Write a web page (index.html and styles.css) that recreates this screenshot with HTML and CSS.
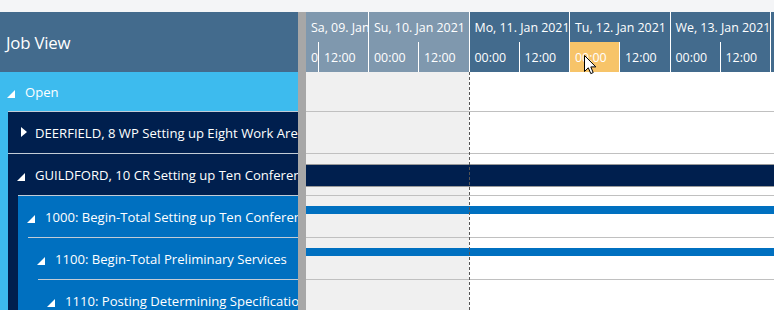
FILE: index.html
```html
<!DOCTYPE html>
<html>
<head>
<meta charset="utf-8">
<link rel="stylesheet" href="styles.css">
</head>
<body>
<div class="topbar"></div>
<div class="main">
  <div class="left">
    <div class="lhead">Job View</div>
    <div class="tree">
      <div class="grp g-open">
        <div class="row first"><span class="tri exp"></span><span class="lbl">Open</span></div>
        <div class="kids k0">
          <div class="grp g-navy">
            <div class="row"><span class="tri col"></span><span class="lbl">DEERFIELD, 8 WP Setting up Eight Work Areas</span></div>
          </div>
          <div class="grp g-navy">
            <div class="row"><span class="tri exp"></span><span class="lbl">GUILDFORD, 10 CR Setting up Ten Conference Rooms</span></div>
            <div class="kids">
              <div class="grp g-blue">
                <div class="row"><span class="tri exp"></span><span class="lbl">1000: Begin-Total Setting up Ten Conference Rooms</span></div>
                <div class="kids">
                  <div class="grp g-blue">
                    <div class="row"><span class="tri exp"></span><span class="lbl">1100: Begin-Total Preliminary Services</span></div>
                    <div class="kids">
                      <div class="grp g-blue">
                        <div class="row"><span class="tri exp"></span><span class="lbl">1110: Posting Determining Specifications</span></div>
                      </div>
                    </div>
                  </div>
                </div>
              </div>
            </div>
          </div>
        </div>
      </div>
    </div>
  </div>
  <div class="splitter"></div>
  <div class="right">
    <div class="thead">
      <div class="days">
        <div class="day past d-first"><span class="dl">Sa, 09. Jan 2021</span></div>
        <div class="day past"><span class="dl">Su, 10. Jan 2021</span></div>
        <div class="day"><span class="dl">Mo, 11. Jan 2021</span></div>
        <div class="day"><span class="dl">Tu, 12. Jan 2021</span></div>
        <div class="day"><span class="dl">We, 13. Jan 2021</span></div>
        <div class="day"><span class="dl">Th, 14. Jan 2021</span></div>
      </div>
      <div class="hours">
        <div class="hr past h-first"><span class="hl">0</span></div>
        <div class="hr past h-half"><span class="hl">12:00</span></div>
        <div class="hr past"><span class="hl">00:00</span></div>
        <div class="hr past h-end"><span class="hl">12:00</span></div>
        <div class="hr"><span class="hl">00:00</span></div>
        <div class="hr h-end"><span class="hl">12:00</span></div>
        <div class="hr hot"><span class="hl">00:00</span></div>
        <div class="hr h-end"><span class="hl">12:00</span></div>
        <div class="hr"><span class="hl">00:00</span></div>
        <div class="hr h-end"><span class="hl">12:00</span></div>
        <div class="hr"><span class="hl">00:00</span></div>
      </div>
    </div>
    <div class="tbody">
      <div class="trow first"></div>
      <div class="trow"></div>
      <div class="trow"><div class="bar bar-navy"></div></div>
      <div class="trow"><div class="bar bar-blue"></div></div>
      <div class="trow"><div class="bar bar-blue"></div></div>
      <div class="trow"></div>
      <div class="nowline"></div>
    </div>
    <svg class="cursor" width="13" height="20" viewBox="0 0 13 20"><path d="M0.5 0.5 L0.5 16.5 L4.3 12.8 L6.8 18.6 L9.2 17.6 L6.8 11.9 L11.8 11.9 Z" fill="#fff" stroke="#000" stroke-width="1" stroke-linejoin="miter"/></svg>
  </div>
</div>
</body>
</html>
```

FILE: styles.css
```css
html, body {
  margin: 0;
  padding: 0;
  width: 774px;
  height: 310px;
  overflow: hidden;
  background: #ffffff;
  font-family: "Open Sans", "Noto Sans", "DejaVu Sans", sans-serif;
  color: #ffffff;
}

.topbar {
  height: 12px;
  background: #f4f5f7;
}

.main {
  display: flex;
  height: 298px;
}

.left {
  width: 298px;
  flex: none;
  overflow: hidden;
  background: #3dbbee;
}

.lhead {
  height: 60px;
  background: #436b8d;
  display: flex;
  align-items: center;
  padding-left: 6px;
  font-size: 16.8px;
  letter-spacing: -0.2px;
}

.tree {
  font-size: 13.1px;
}

.grp.g-open { background: #3dbbee; }
.grp.g-navy { background: #001f4e; }
.grp.g-blue { background: #0070c0; }

.kids { padding-left: 10px; }
.kids.k0 { padding-left: 8px; }

.row {
  height: 41px;
  border-top: 1px solid #c2ccd6;
  display: flex;
  align-items: center;
  padding-left: 9px;
  white-space: nowrap;
  overflow: hidden;
}

.row.first {
  height: 39px;
  border-top: none;
  padding-left: 7px;
}

.tri {
  width: 18px;
  height: 12px;
  flex: none;
  position: relative;
}

.tri.exp::before {
  content: "";
  position: absolute;
  left: 0;
  bottom: 0;
  border-style: solid;
  border-width: 0 0 8px 8px;
  border-color: transparent transparent #ffffff transparent;
}

.tri.col::before {
  content: "";
  position: absolute;
  left: 4px;
  top: 0;
  border-style: solid;
  border-width: 5.5px 0 5.5px 6px;
  border-color: transparent transparent transparent #ffffff;
}

.lbl {
  white-space: nowrap;
}

.splitter {
  width: 8px;
  flex: none;
  background: #a7a7a7;
}

.right {
  flex: 1;
  position: relative;
  overflow: hidden;
}

.thead {
  height: 60px;
  background: #436b8d;
  font-size: 12.4px;
  overflow: hidden;
}

.days {
  display: flex;
  height: 30px;
}

.day {
  width: 100.5px;
  flex: none;
  box-sizing: border-box;
  border-right: 1px solid #ffffff;
  background: #436b8d;
  display: flex;
  align-items: center;
  padding-left: 5px;
  white-space: nowrap;
  overflow: hidden;
}

.day.past { background: #7f98ae; }
.day.d-first { width: 63px; }

.hours {
  display: flex;
  height: 30px;
}

.hr {
  width: 50px;
  flex: none;
  box-sizing: border-box;
  background: #436b8d;
  display: flex;
  align-items: center;
  padding-left: 5px;
  white-space: nowrap;
  overflow: hidden;
  border-right: 1px solid #ffffff;
}

.hr.past { background: #7f98ae; }
.hr.h-first { width: 13px; }
.hr.h-half { width: 50px; }
.hr.h-end { width: 50.5px; }
.hr.hot { background: #f7c469; }

.tbody {
  position: relative;
  height: 238px;
  background: linear-gradient(to right, #f0f0f0 0, #f0f0f0 163px, #ffffff 163px);
}

.trow {
  border-top: 1px solid #c0c0c0;
  box-sizing: content-box;
  padding-top: 10px;
  height: 31px;
}

.trow.first {
  height: 39px;
  padding-top: 0;
  border-top: none;
}

.bar-navy {
  height: 21px;
  background: #001f4e;
  border-top: 1px solid #9a9a9a;
  border-bottom: 1px solid #9a9a9a;
}

.bar-blue {
  height: 8px;
  background: #0070c0;
}

.nowline {
  position: absolute;
  left: 163px;
  top: 0;
  bottom: 0;
  width: 0;
  border-left: 1px dashed #555555;
}

.cursor {
  position: absolute;
  left: 278px;
  top: 43px;
}
```
